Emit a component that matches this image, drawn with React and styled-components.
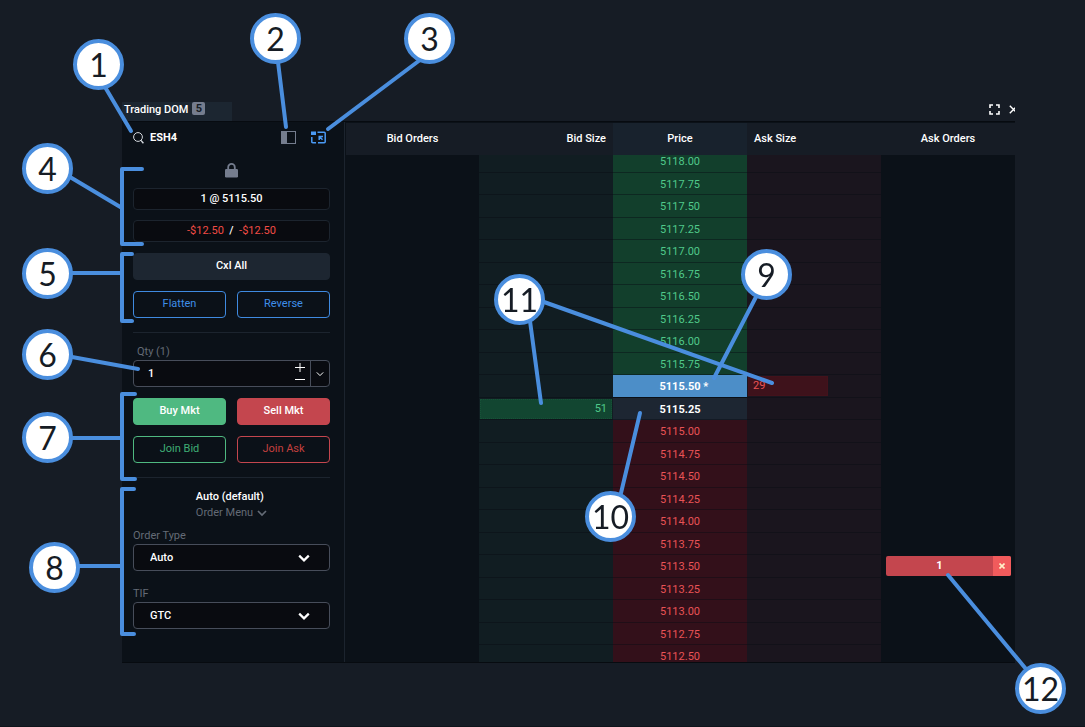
import React from 'react';
import styled, { createGlobalStyle } from 'styled-components';

const GlobalStyle = createGlobalStyle`
  * {
    box-sizing: border-box;
  }
  body {
    margin: 0;
    background: #161c25;
    color: #fff;
    font-family: Roboto, sans-serif;
    font-size: 11px;
    line-height: 16px;
  }
  button, input, select {
    font: inherit;
    color: inherit;
    margin: 0;
  }
  button {
    cursor: pointer;
  }
`;

const Page = styled.main`
  position: relative;
  min-height: 100vh;
  padding: 102px 70px 63px 122px;
  border-bottom: 1px solid #0f141b;
`;

/* title bar */
const TitleBar = styled.header`
  display: flex;
  justify-content: space-between;
  height: 19px;
  overflow: hidden;
`;
const Tab = styled.div`
  display: flex;
  align-items: flex-start;
  gap: 4px;
  width: 110px;
  padding: 0 2px;
  background: #1c2631;
  font-weight: 500;
  line-height: 15px;
`;
const TabBadge = styled.span`
  width: 13px;
  height: 13px;
  border-radius: 2px;
  background: #757d8e;
  color: #161c25;
  font-weight: 700;
  line-height: 14px;
  text-align: center;
`;
const WindowTools = styled.div`
  display: flex;
  align-items: center;
  gap: 9px;
  margin-right: -3px;
  padding-bottom: 4px;
`;
const IconButton = styled.button`
  display: flex;
  padding: 0;
  border: 0;
  background: none;
  color: ${props => props.$color || '#fff'};
`;

const Panel = styled.section`
  display: flex;
  border-top: 1px solid #070b10;
  border-bottom: 1px solid #070b10;
  background: #0b1118;
`;

/* sidebar */
const Sidebar = styled.div`
  flex: none;
  width: 223px;
  margin-right: 1px;
  padding: 0 14px 33px 11px;
  border-right: 1px solid #1c242e;
`;
const SymbolRow = styled.div`
  display: flex;
  align-items: center;
  height: 32px;
  padding: 0 4px 1px 0;
`;
const SymbolName = styled.span`
  flex: 1;
  padding-left: 6px;
  font-weight: 700;
`;
const SymbolTools = styled.div`
  display: flex;
  gap: 15px;
`;
const LockRow = styled.div`
  display: flex;
  align-items: center;
  justify-content: center;
  height: 34px;
  padding-bottom: 2px;
`;
const Readout = styled.div`
  height: 22px;
  margin-bottom: ${props => props.$gap}px;
  border: 1px solid #1c242e;
  border-radius: 4px;
  background: #090b10;
  font-weight: 500;
  line-height: 19px;
  text-align: center;
`;
const Loss = styled.span`
  color: #f24b45;
  font-weight: 400;
`;
const Buttons = styled.div`
  display: grid;
  grid-template-columns: 1fr 1fr;
  gap: 11px;
`;
const Button = styled.button`
  grid-column: ${props => (props.$wide ? '1 / -1' : 'auto')};
  height: 27px;
  padding: 0 0 2px;
  border: 1px solid ${props => props.$border || props.$fill};
  border-radius: 4px;
  background: ${props => props.$fill || 'transparent'};
  color: ${props => props.$color || '#fff'};
  font-weight: ${props => (props.$fill ? 500 : 400)};
`;
const Divider = styled.hr`
  height: 1px;
  margin: 14px 0 0;
  border: 0;
  background: #1c242e;
`;
const Label = styled.label`
  display: block;
  padding: ${props => props.$top}px 0 0 ${props => props.$left || 0}px;
  color: #646b76;
  line-height: 17px;
`;
const QtyBox = styled.div`
  display: flex;
  height: 27px;
  margin-bottom: 11px;
  border: 1px solid #474d5a;
  border-radius: 4px;
  background: #090b10;
`;
const QtyInput = styled.input`
  flex: 1;
  min-width: 0;
  padding: 0 14px;
  border: 0;
  outline: none;
  background: none;
  font-weight: 500;
`;
const Stepper = styled.div`
  display: flex;
  flex-direction: column;
  justify-content: flex-start;
  width: 15px;
`;
const QtyMenu = styled.button`
  display: flex;
  align-items: center;
  justify-content: center;
  width: 19px;
  padding: 0;
  border: 0;
  border-left: 1px solid #474d5a;
  background: none;
`;
const OrderMenu = styled.div`
  display: flex;
  flex-direction: column;
  align-items: flex-start;
  width: max-content;
  margin: 11px auto 0;
  font-weight: 500;
`;
const OrderMenuButton = styled.button`
  display: flex;
  align-items: center;
  gap: 4px;
  height: 16px;
  padding: 0;
  border: 0;
  background: none;
  color: #646b76;
  font-weight: 400;
`;
const SelectBox = styled.div`
  display: grid;
  grid-template-columns: 1fr 32px;
  align-items: center;

  select {
    grid-area: 1 / 1 / 2 / 3;
    height: 27px;
    padding: 0 16px;
    appearance: none;
    border: 1px solid #474d5a;
    border-radius: 4px;
    background: #090b10;
    font-weight: 500;
  }
  svg {
    grid-area: 1 / 2;
    pointer-events: none;
  }
`;

/* price ladder */
const Ladder = styled.div`
  flex: 1;
  min-width: 0;
  contain: size;
  overflow: hidden;
`;
const LadderTable = styled.table`
  width: 100%;
  margin-top: -5px;
  border-spacing: 0;
  table-layout: fixed;

  thead {
    position: sticky;
    top: 0;
    z-index: 1;
  }
`;
const HeadCell = styled.th`
  height: 33px;
  padding: 0 7px;
  border-top: 1px solid #0b1118;
  background: ${props => (props.$price ? '#18222d' : '#161c25')};
  font-weight: 500;
  text-align: ${props => props.$align || 'center'};

  &:first-child {
    width: 133px;
  }
`;
const Row = styled.tr`
  height: 22px;

  &:nth-child(odd) {
    height: 23px;
  }
`;
const cellFill = {
  orders: '#0b1118',
  bid: '#111d22',
  ask: '#1a151e',
  above: '#123f2c',
  below: '#33101a',
  last: '#4c8ec8',
  spread: '#1d2632',
};
const cellText = {
  above: '#50c98a',
  below: '#e95356',
};
const cellPadding = {
  orders: '0 4px 0 5px',
  bid: '0 1px',
  ask: '0 1px',
};
const Cell = styled.td`
  padding: ${props => cellPadding[props.$kind] || '2px 0 0'};
  border-bottom: 1px solid ${props => (props.$kind === 'orders' ? '#0b1118' : 'rgba(8, 13, 19, 0.45)')};
  background: ${props => cellFill[props.$kind]};
  background-clip: ${props => (props.$kind === 'last' ? 'padding-box' : 'border-box')};
  color: ${props => cellText[props.$kind] || '#fff'};
  font-weight: ${props => (props.$kind === 'last' || props.$kind === 'spread' ? 700 : 400)};
  line-height: 19px;
  text-align: center;
  vertical-align: top;
`;
const Star = styled.span`
  display: inline-block;
  width: 0;
  white-space: pre;
`;
const SizeBar = styled.div`
  height: 20px;
  margin-top: 1px;
  padding: 0 4px;
  border: 1px ${props => (props.$bid ? 'dotted #165237' : 'solid #43121b')};
  background: ${props => (props.$bid ? '#124631' : '#3e121b')};
  color: ${props => (props.$bid ? '#50c98a' : '#e95356')};
  line-height: 18px;
  text-align: ${props => (props.$bid ? 'right' : 'left')};
`;
const WorkingOrder = styled.div`
  display: flex;
  height: 20px;
  margin-top: 1px;
  border-radius: 2px;
  overflow: hidden;
  background: #c4464e;
  font-weight: 700;

  span {
    flex: 1;
  }
`;
const CancelOrder = styled.button`
  display: flex;
  align-items: center;
  justify-content: center;
  width: 18px;
  padding: 0;
  border: 0;
  background: #f15b5c;
  color: #fff2c9;
`;

/* callouts */
const Leaders = styled.svg`
  position: absolute;
  top: 0;
  left: 0;
  pointer-events: none;
`;
const Callout = styled.span`
  position: absolute;
  top: ${props => props.$y - 25}px;
  left: ${props => props.$x - 25}px;
  z-index: 2;
  width: 51px;
  height: 51px;
  border: 4px solid #4a8ede;
  border-radius: 50%;
  background: #fff;
  color: #161c25;
  font-family: Lato, sans-serif;
  font-size: 32px;
  line-height: 43px;
  text-align: center;
`;

const callouts = [
  [98, 64], [275, 38], [429, 38], [47, 168], [47, 273], [47, 354],
  [47, 437], [54, 567], [766, 274], [610, 516], [519, 299], [1040, 688],
];

const leaderPaths = [
  'M105 87L131 131',
  'M278 62L286 127',
  'M420 60L328 129',
  'M70 177L122 208M142 169H122V244H142',
  'M72 273H122M132 254H122V321H132',
  'M72 357L138 369',
  'M72 438H122M135 394H122V479H135',
  'M79 566H122M134 489H122V634H134',
  'M757 295L714 378',
  'M621 493L640 413',
  'M530 321L541 403M544 302L772 383',
  'M948 575L1026 669',
];

const SIZES = {
  '5115.50': { ask: 29 },
  '5115.25': { bid: 51 },
};
const ORDERS = { '5113.50': 1 };
const LAST = 5115.5;
const prices = Array.from({ length: 23 }, (_, i) => 5118 - i * 0.25);

const priceKind = (price) => {
  if (price === LAST) return 'last';
  if (price === LAST - 0.25) return 'spread';
  return price > LAST ? 'above' : 'below';
};

const Chevron = ({ size = 12, width = 2 }) => (
  <svg width={size} height={size} viewBox="0 0 12 12" fill="none" stroke="currentColor" strokeWidth={width}>
    <path d="M1.2 3.6L6 8.4L10.8 3.6" />
  </svg>
);

const PriceRow = ({ price }) => {
  const label = price.toFixed(2);
  const kind = priceKind(price);
  const { bid, ask } = SIZES[label] || {};
  return (
    <Row>
      <Cell $kind="orders" />
      <Cell $kind="bid">{bid && <SizeBar $bid>{bid}</SizeBar>}</Cell>
      <Cell $kind={kind}>
        {label}
        {kind === 'last' && <Star> *</Star>}
      </Cell>
      <Cell $kind="ask">
        {ask && <SizeBar style={{ width: `${(ask / 48) * 100}%` }}>{ask}</SizeBar>}
      </Cell>
      <Cell $kind="orders">
        {ORDERS[label] && (
          <WorkingOrder>
            <span>{ORDERS[label]}</span>
            <CancelOrder aria-label="Cancel order">
              <svg width="6" height="6" viewBox="0 0 6 6" stroke="currentColor" strokeWidth="1.6">
                <path d="M0.5 0.5L5.5 5.5M5.5 0.5L0.5 5.5" />
              </svg>
            </CancelOrder>
          </WorkingOrder>
        )}
      </Cell>
    </Row>
  );
};

class App extends React.Component {
  state = {
    qty: '1',
  };

  handleQty = (e) => {
    this.setState({ qty: e.target.value });
  }

  step = (amount) => {
    this.setState((prevState) => ({
      qty: String(Math.max(1, Number(prevState.qty) + amount)),
    }));
  }

  render() {
    const { qty } = this.state;
    return (
      <Page>
        <GlobalStyle />
        <TitleBar>
          <Tab>
            Trading DOM
            <TabBadge>5</TabBadge>
          </Tab>
          <WindowTools>
            <IconButton aria-label="Full screen">
              <svg width="11" height="11" viewBox="0 0 11 11" fill="none" stroke="currentColor" strokeWidth="1.6">
                <path d="M1 4V1H4M7 1H10V4M10 7V10H7M4 10H1V7" />
              </svg>
            </IconButton>
            <IconButton aria-label="Close">
              <svg width="9" height="9" viewBox="0 0 9 9" stroke="currentColor" strokeWidth="1.4">
                <path d="M0.8 0.8L8.2 8.2M8.2 0.8L0.8 8.2" />
              </svg>
            </IconButton>
          </WindowTools>
        </TitleBar>

        <Panel>
          <Sidebar>
            <SymbolRow>
              <svg width="11" height="12" viewBox="0 0 11 12" fill="none" stroke="#d5d9df">
                <circle cx="5" cy="5" r="4.4" />
                <path d="M8 8.4L10.4 11.2" strokeWidth="1.4" />
              </svg>
              <SymbolName>ESH4</SymbolName>
              <SymbolTools>
                <IconButton $color="#757d8e" aria-label="Toggle side panel">
                  <svg width="15" height="13" viewBox="0 0 15 13" fill="none" stroke="currentColor">
                    <rect x="0.5" y="0.5" width="14" height="12" />
                    <path d="M0.5 0.5H5.5V12.5H0.5Z" fill="currentColor" />
                  </svg>
                </IconButton>
                <IconButton $color="#4a9af5" aria-label="Pop out">
                  <svg width="15" height="13" viewBox="0 0 15 13" fill="none" stroke="currentColor">
                    <rect x="0" y="0.5" width="5" height="3.5" fill="currentColor" stroke="none" />
                    <path d="M6.5 1.2H13.2Q14.2 1.2 14.2 2.2V10.8Q14.2 11.8 13.2 11.8H7M5 11.8H1.8Q0.8 11.8 0.8 10.8V6" strokeWidth="1.5" />
                    <path d="M8.2 9V5.4H12M8.6 5.8L11.5 8.8" strokeWidth="1.5" />
                  </svg>
                </IconButton>
              </SymbolTools>
            </SymbolRow>
            <LockRow>
              <svg width="13" height="15" viewBox="0 0 13 15" fill="none">
                <rect y="6" width="13" height="8.5" rx="1.2" fill="#757d8e" />
                <path d="M3.2 7V4.2A3.3 3.3 0 0 1 9.8 4.2V7" stroke="#757d8e" strokeWidth="1.8" />
              </svg>
            </LockRow>
            <Readout $gap={10}>1 @ 5115.50</Readout>
            <Readout $gap={11}>
              <Loss>-$12.50</Loss>
              {'\u00a0 / \u00a0'}
              <Loss>-$12.50</Loss>
            </Readout>
            <Buttons>
              <Button $wide $fill="#1d2631">Cxl All</Button>
              <Button $border="#3f8ae0" $color="#3f8ee8">Flatten</Button>
              <Button $border="#3f8ae0" $color="#3f8ee8">Reverse</Button>
            </Buttons>
            <Divider />

            <Label htmlFor="qty" $top={10} $left={4}>Qty (1)</Label>
            <QtyBox>
              <QtyInput id="qty" value={qty} onChange={this.handleQty} />
              <Stepper>
                <IconButton aria-label="Increase" onClick={() => this.step(1)}>
                  <svg width="10" height="13" viewBox="0 0 10 13" stroke="currentColor">
                    <path d="M0 6.5H10M5 2V11" />
                  </svg>
                </IconButton>
                <IconButton aria-label="Decrease" onClick={() => this.step(-1)}>
                  <svg width="10" height="10" viewBox="0 0 10 10" stroke="currentColor">
                    <path d="M0 5.5H10" />
                  </svg>
                </IconButton>
              </Stepper>
              <QtyMenu aria-label="Quantity presets"><Chevron size={8} width={1.5} /></QtyMenu>
            </QtyBox>
            <Buttons>
              <Button $fill="#4fb981">Buy Mkt</Button>
              <Button $fill="#c4464e">Sell Mkt</Button>
              <Button $border="#4fb981" $color="#3fae75">Join Bid</Button>
              <Button $border="#c4464e" $color="#c4403f">Join Ask</Button>
            </Buttons>
            <Divider />

            <OrderMenu>
              Auto (default)
              <OrderMenuButton>Order Menu <Chevron size={10} /></OrderMenuButton>
            </OrderMenu>
            <Label htmlFor="type" $top={6}>Order Type</Label>
            <SelectBox>
              <select id="type" defaultValue="Auto">
                <option>Auto</option>
                <option>Limit</option>
              </select>
              <Chevron width={2.2} />
            </SelectBox>
            <Label htmlFor="tif" $top={14}>TIF</Label>
            <SelectBox>
              <select id="tif" defaultValue="GTC">
                <option>GTC</option>
                <option>Day</option>
              </select>
              <Chevron width={2.2} />
            </SelectBox>
          </Sidebar>

          <Ladder>
            <LadderTable>
              <thead>
                <tr>
                  <HeadCell>Bid Orders</HeadCell>
                  <HeadCell $align="right">Bid Size</HeadCell>
                  <HeadCell $price>Price</HeadCell>
                  <HeadCell $align="left">Ask Size</HeadCell>
                  <HeadCell>Ask Orders</HeadCell>
                </tr>
              </thead>
              <tbody>
                {prices.map(price => <PriceRow key={price} price={price} />)}
              </tbody>
            </LadderTable>
          </Ladder>
        </Panel>

        <Leaders width="1085" height="726" fill="none" stroke="#4a8ede" strokeWidth="4" strokeLinecap="round" strokeLinejoin="round">
          {leaderPaths.map(d => <path key={d} d={d} />)}
        </Leaders>
        {callouts.map(([x, y], i) => <Callout key={i} $x={x} $y={y}>{i + 1}</Callout>)}
      </Page>
    );
  }
}

export default App;
